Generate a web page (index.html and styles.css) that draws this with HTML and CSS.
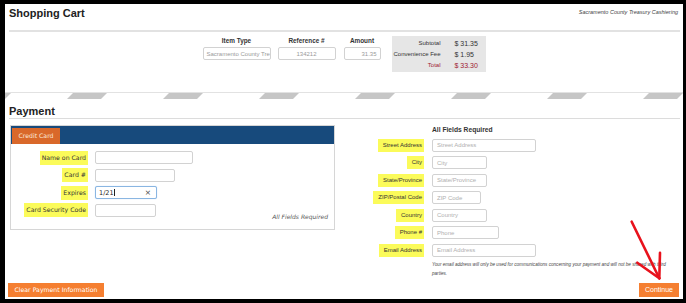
FILE: index.html
```html
<!DOCTYPE html>
<html>
<head>
<meta charset="utf-8">
<link rel="stylesheet" href="styles.css">
</head>
<body>
<div class="page">
  <header class="top">
    <h1 class="title">Shopping Cart</h1>
    <div class="brand">Sacramento County Treasury Cashiering</div>
  </header>

  <section class="cart">
    <div class="col col-item">
      <div class="col-h">Item Type</div>
      <div class="field ro">Sacramento County Tre</div>
    </div>
    <div class="col col-ref">
      <div class="col-h">Reference #</div>
      <div class="field ro center">134212</div>
    </div>
    <div class="col col-amt">
      <div class="col-h">Amount</div>
      <div class="field ro right">31.35</div>
    </div>
    <div class="summary">
      <span class="sum-l">Subtotal</span><span class="sum-v">$ 31.35</span>
      <span class="sum-l">Convenience Fee</span><span class="sum-v">$ 1.95</span>
      <span class="sum-l total">Total</span><span class="sum-v total">$ 33.30</span>
    </div>
  </section>

  <svg class="stripes" width="678" height="7" viewBox="0 0 678 7">
    <defs>
      <pattern id="st" x="62" y="0" width="96" height="7" patternUnits="userSpaceOnUse">
        <polygon points="0,7 6,1 40,1 34,7" fill="#c6c6c6"/>
      </pattern>
    </defs>
    <rect x="0" y="0" width="678" height="7" fill="url(#st)"/>
    <line x1="0" y1="0.5" x2="678" y2="0.5" stroke="#e2e2e2" stroke-width="1"/>
  </svg>

  <h2 class="title pay-title">Payment</h2>

  <section class="pay">
    <div class="cc-panel">
      <div class="cc-bar"><span class="cc-tab">Credit Card</span></div>
      <div class="cc-form">
        <span class="hl hl-v">Name on Card</span>
        <div class="field w98"></div>
        <span class="hl hl-v">Card #</span>
        <div class="field w80"></div>
        <span class="hl hl-v">Expires</span>
        <div class="field w62 focus"><span class="val">1/21</span><span class="caret"></span><span class="clear">×</span></div>
        <span class="hl hl-v">Card Security Code</span>
        <div class="field w61"></div>
        <div class="cc-req">All Fields Required</div>
      </div>
    </div>

    <div class="addr">
      <div class="addr-h">All Fields Required</div>
      <span class="hl hl-a">Street Address</span>
      <div class="field w104"><span class="ph">Street Address</span></div>
      <span class="hl hl-a">City</span>
      <div class="field w55"><span class="ph">City</span></div>
      <span class="hl hl-a">State/Province</span>
      <div class="field w55"><span class="ph">State/Province</span></div>
      <span class="hl hl-a">ZIP/Postal Code</span>
      <div class="field w49"><span class="ph">ZIP Code</span></div>
      <span class="hl hl-a">Country</span>
      <div class="field w55"><span class="ph">Country</span></div>
      <span class="hl hl-a">Phone #</span>
      <div class="field w67"><span class="ph">Phone</span></div>
      <span class="hl hl-a">Email Address</span>
      <div class="field w104"><span class="ph">Email Address</span></div>
      <p class="note">Your email address will only be used for communications concerning your payment and will not be shared with third parties.</p>
    </div>
  </section>

  <div class="actions">
    <button class="btn btn-clear">Clear Payment Information</button>
    <button class="btn btn-go">Continue</button>
  </div>

  <svg class="arrow" width="45" height="70" viewBox="0 0 45 70">
    <g stroke="#e8121c" stroke-width="2.6" stroke-linecap="round" fill="none">
      <line x1="6.7" y1="5.7" x2="34.3" y2="62.3"/>
      <line x1="12.3" y1="46.7" x2="34.3" y2="62.3"/>
      <line x1="35" y1="36.7" x2="34.3" y2="62.3"/>
    </g>
  </svg>
</div>
</body>
</html>
```

FILE: styles.css
```css
* { box-sizing: border-box; margin: 0; padding: 0; }
html, body { background: #000; }
body {
  width: 686px;
  height: 303px;
  overflow: hidden;
  font-family: "Liberation Sans", Arial, sans-serif;
  color: #333;
}
.page {
  position: relative;
  margin: 4px 3px 0 5px;
  height: 295px;
  background: #fff;
  display: flex;
  flex-direction: column;
}

/* header */
.top {
  display: flex;
  justify-content: space-between;
  align-items: flex-start;
  margin: 0 3px 0 4px;
  height: 28px;
  border-bottom: 2px solid #e2e2e2;
}
.title {
  font-size: 11px;
  font-weight: bold;
  line-height: 13px;
  margin-top: 3px;
  color: #222;
}
.brand {
  font-size: 5.5px;
  font-style: italic;
  line-height: 7px;
  margin-top: 5px;
  margin-right: 2px;
  color: #444;
}

/* cart */
.cart {
  height: 60px;
  display: flex;
  justify-content: center;
  align-items: flex-start;
}
.col { padding-top: 5px; }
.col-item { width: 68px; margin-right: 7px; }
.col-ref { width: 58px; margin-right: 8px; }
.col-amt { width: 37px; margin-right: 11px; }
.col-h {
  font-size: 6.4px;
  font-weight: bold;
  line-height: 8px;
  text-align: center;
  color: #333;
  margin-bottom: 2px;
}
.field {
  height: 13px;
  border: 1px solid #d2d2d2;
  border-radius: 2px;
  background: #fff;
  display: flex;
  align-items: center;
  overflow: hidden;
  white-space: nowrap;
}
.ro {
  font-size: 6px;
  color: #9a9a9a;
  padding: 0 3px;
}
.ro.center { justify-content: center; }
.ro.right { justify-content: flex-end; }
.summary {
  margin-top: 4px;
  width: 94px;
  height: 36px;
  background: #e6e6e6;
  padding-top: 2px;
  display: grid;
  grid-template-columns: 49px 1fr;
  column-gap: 14px;
  grid-auto-rows: 11px;
  align-content: start;
  font-size: 6px;
  line-height: 11px;
  color: #333;
}
.sum-l { text-align: right; white-space: nowrap; }
.sum-v { white-space: nowrap; font-size: 7px; }
.total { color: #a01a30; }

.stripes { display: block; }

/* payment heading */
.pay-title {
  margin: 0 3px 0 4px;
  padding-top: 6px;
  height: 20px;
  border-bottom: 1px solid #dcdcdc;
}

.pay {
  display: flex;
  align-items: flex-start;
  margin-top: 6px;
}
.cc-panel {
  margin-left: 5px;
  width: 325px;
  border: 1px solid #d6d6d6;
  padding-bottom: 12.5px;
}
.cc-bar {
  height: 18px;
  background: #174a7c;
  padding: 2px 0 0 1px;
}
.cc-tab {
  display: block;
  width: 48px;
  height: 16px;
  background: #d9682a;
  color: #fbe9dc;
  font-family: "DejaVu Sans", Verdana, sans-serif;
  font-size: 6.2px;
  line-height: 16px;
  text-align: center;
}
.cc-form {
  display: grid;
  grid-template-columns: 77px auto 1fr;
  column-gap: 7px;
  row-gap: 4.5px;
  grid-auto-rows: 13px;
  align-items: center;
  padding-top: 7px;
}
.cc-form .hl { grid-column: 1; }
.cc-form .field { grid-column: 2; }
.hl {
  justify-self: end;
  background: #fbfb5a;
  white-space: nowrap;
  color: #333;
}
.hl-v {
  font-family: "DejaVu Sans", Verdana, sans-serif;
  font-size: 6.2px;
  line-height: 14px;
  padding: 0 2px;
}
.hl-a {
  font-size: 6px;
  line-height: 13px;
  padding: 0 2px 0 5px;
}
.w98 { width: 98px; }
.w80 { width: 80px; }
.w62 { width: 62px; }
.w61 { width: 61px; }
.w104 { width: 104px; }
.w55 { width: 55px; }
.w49 { width: 49px; }
.w67 { width: 67px; }
.focus {
  border-color: #8ab6e2;
  box-shadow: 0 0 1px #a9cdf0;
  padding: 0 5px 0 3px;
  font-family: "DejaVu Sans", Verdana, sans-serif;
  font-size: 6.5px;
  color: #222;
}
.caret {
  display: inline-block;
  width: 0.6px;
  height: 7px;
  background: #222;
  margin-left: 0.5px;
}
.clear {
  margin-left: auto;
  font-size: 7.5px;
  color: #444;
}
.cc-req {
  grid-column: 3;
  grid-row: 4;
  justify-self: end;
  align-self: end;
  margin-bottom: -4px;
  margin-right: 6px;
  font-family: "DejaVu Sans", Verdana, sans-serif;
  font-size: 6px;
  font-style: italic;
  line-height: 8px;
  color: #555;
  white-space: nowrap;
}

/* address column */
.addr {
  flex: 1;
  margin-right: 3px;
  padding-top: 1px;
  display: grid;
  grid-template-columns: 89px 1fr;
  column-gap: 8px;
  row-gap: 4.5px;
  align-items: center;
}
.addr .hl { grid-column: 1; }
.addr .field { grid-column: 2; height: 13px; }
.addr-h {
  grid-column: 2;
  font-size: 6.7px;
  font-weight: bold;
  line-height: 8px;
  color: #333;
}
.ph {
  font-size: 6px;
  color: #b0b0b0;
  padding-left: 4px;
}
.note {
  grid-column: 2;
  margin-top: -1px;
  font-size: 4.6px;
  font-style: italic;
  line-height: 9px;
  color: #444;
}

/* actions */
.actions {
  margin-top: auto;
  display: flex;
  justify-content: space-between;
  padding: 0 4px 2px 3px;
}
.btn {
  height: 14px;
  border: 0;
  background: #f57f31;
  color: #fff;
  line-height: 14px;
}
.btn-clear {
  width: 96px;
  font-family: "DejaVu Sans", Verdana, sans-serif;
  font-size: 6.2px;
}
.btn-go {
  width: 40px;
  font-family: "Liberation Sans", Arial, sans-serif;
  font-size: 7px;
}

.arrow {
  position: absolute;
  left: 620px;
  top: 212px;
}
```
